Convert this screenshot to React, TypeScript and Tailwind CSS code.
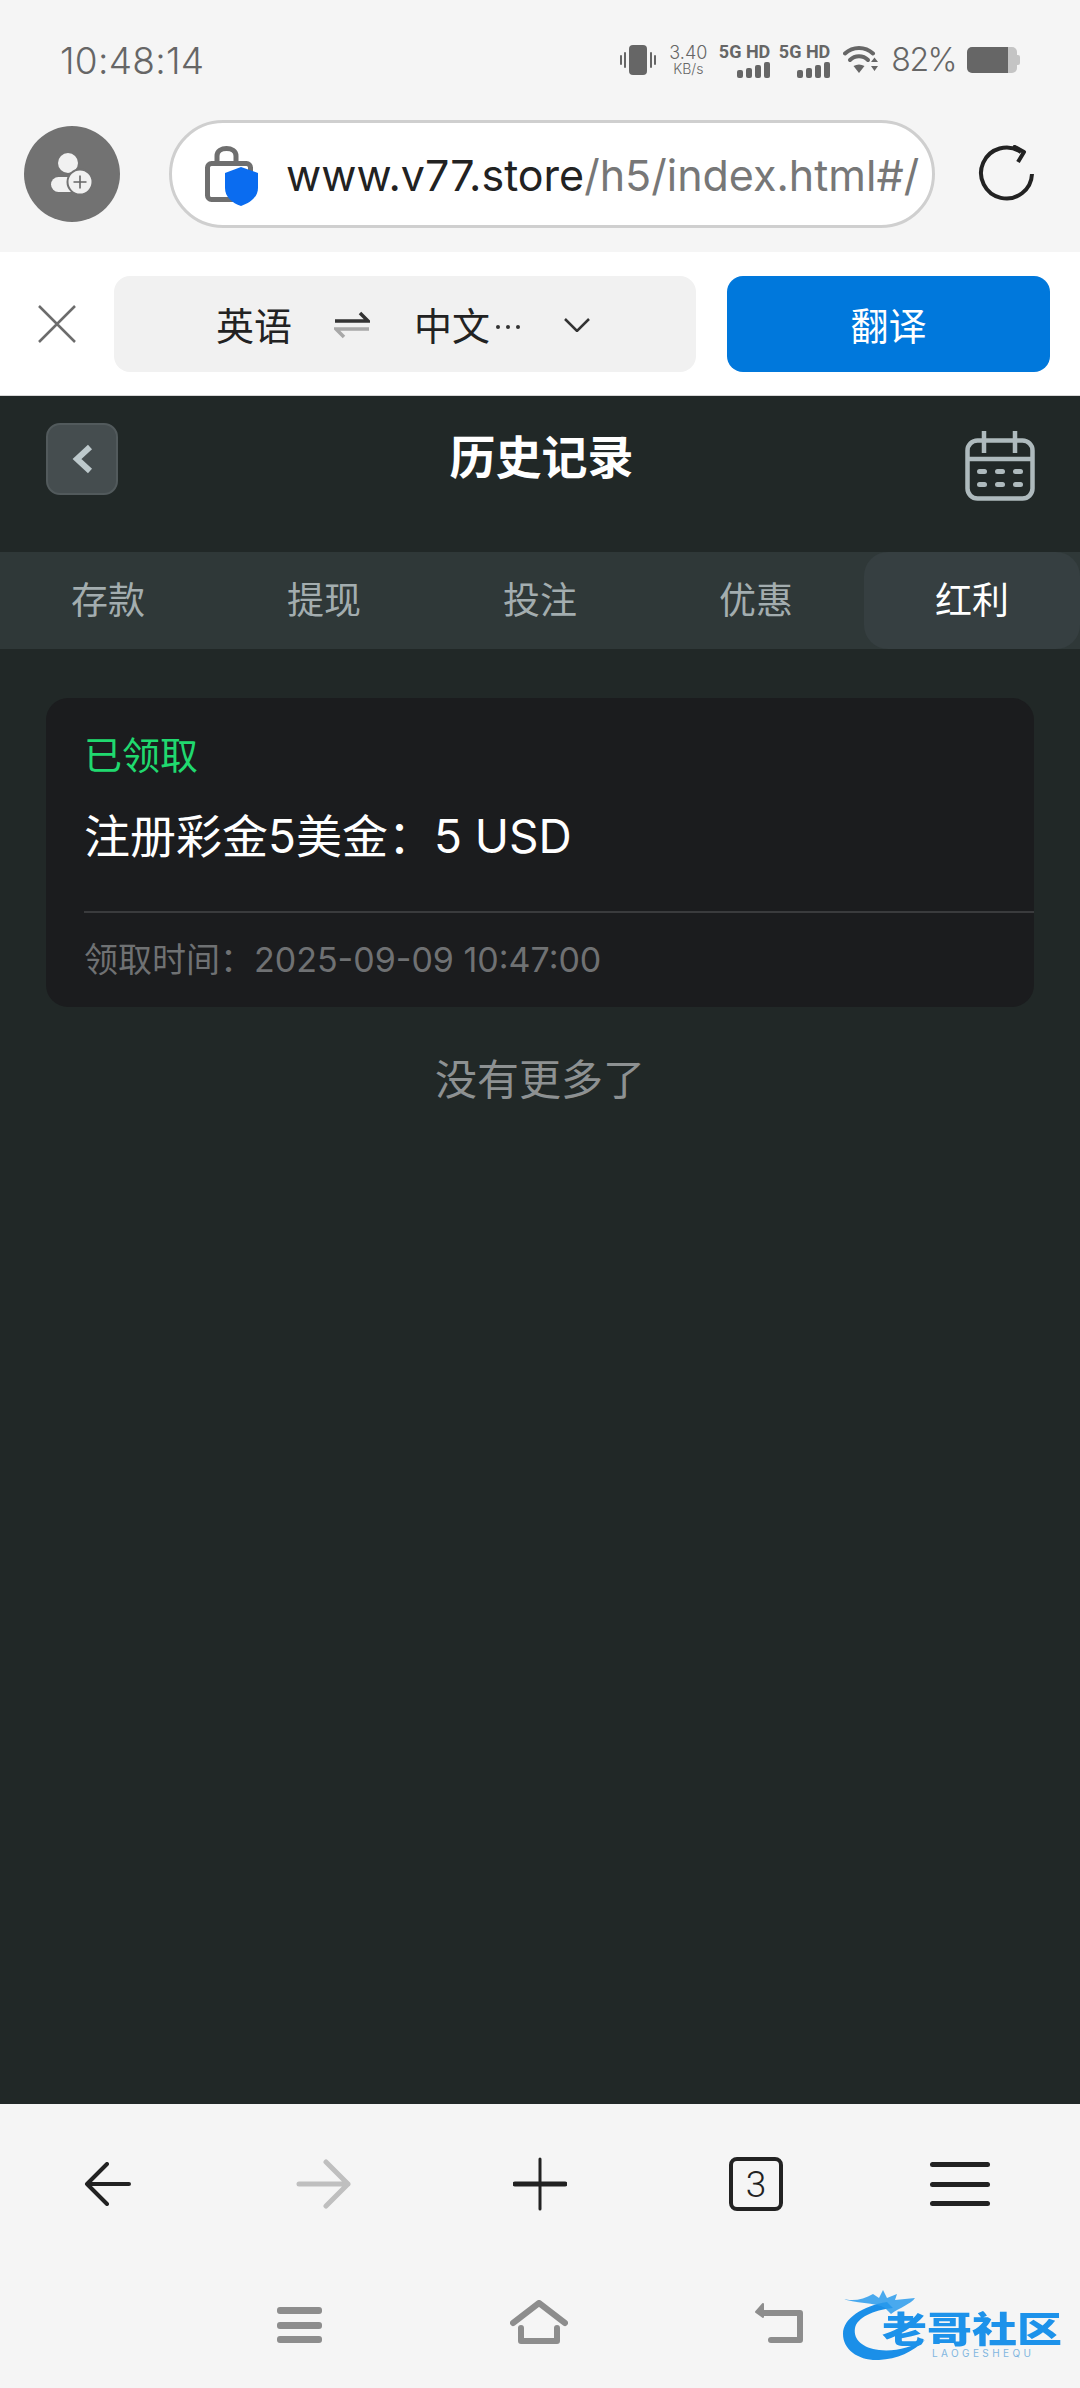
import React from 'react';

const FONT = "font-['Inter','Noto_Sans_CJK_SC',sans-serif]";

const TABS = [
  { label: '存款' },
  { label: '提现' },
  { label: '投注' },
  { label: '优惠' },
  { label: '红利', active: true },
];

function SignalBlock() {
  return (
    <div className="flex w-[49px] flex-col items-end">
      <span className="font-['Roboto'] text-[18px] leading-[17px] font-bold whitespace-nowrap text-[#666]">5G HD</span>
      <div className="mt-[2px] flex items-end gap-[3px]">
        <span className="h-[8px] w-[6px] rounded-[2px] bg-[#666]" />
        <span className="h-[10px] w-[6px] rounded-[2px] bg-[#666]" />
        <span className="h-[13px] w-[6px] rounded-[2px] bg-[#666]" />
        <span className="h-[16px] w-[6px] rounded-[2px] bg-[#666]" />
      </div>
    </div>
  );
}

function StatusBar() {
  return (
    <div className="flex h-[116px] items-center justify-between pt-[4px] pr-[60px] pl-[60px]">
      <span className="text-[37px] leading-none font-light tracking-[0.3px] text-[#666]">10:48:14</span>
      <div className="flex items-center">
        <svg width="36" height="30" viewBox="0 0 36 30" className="mr-[13px]">
          <rect x="9" y="0" width="18" height="30" rx="4" fill="#666" />
          <rect x="0" y="10" width="2" height="10" rx="1" fill="#666" />
          <rect x="4" y="7" width="2" height="16" rx="1" fill="#666" />
          <rect x="30" y="7" width="2" height="16" rx="1" fill="#666" />
          <rect x="34" y="10" width="2" height="10" rx="1" fill="#666" />
        </svg>
        <div className="mr-[14px] flex w-[38px] flex-col items-center text-[#666]">
          <span className="text-[18px] leading-[18px] font-light">3.40</span>
          <span className="text-[14px] leading-[14px] font-light">KB/s</span>
        </div>
        <SignalBlock />
        <div className="ml-[11px]">
          <SignalBlock />
        </div>
        <svg width="36" height="30" viewBox="0 0 36 30" className="ml-[13px]" fill="none" stroke="#666" strokeLinecap="round">
          <path d="M2 8.500C10 1 22 1 30 8.500" strokeWidth="4" />
          <path d="M7 15C12 10 20 10 25 15" strokeWidth="4" />
          <path d="M10.500 21L16 28L21.500 21C18 19 14 19 10.500 21Z" fill="#666" stroke="none" />
          <path d="M28 17L31.500 12.500L35 17Z M28 21L35 21L31.500 26Z" fill="#666" stroke="none" />
        </svg>
        <span className="ml-[12px] text-[32px] leading-none font-light tracking-[-1.5px] text-[#666]">82%</span>
        <div className="ml-[11px] flex h-[26px] w-[53px] items-center">
          <span className="h-full w-[41px] rounded-l-[5px] bg-[#666]" />
          <span className="h-full w-[9px] rounded-r-[5px] bg-[#c4c4c4]" />
          <span className="h-[10px] w-[3px] rounded-r-[2px] bg-[#c4c4c4]" />
        </div>
      </div>
    </div>
  );
}

function AddressBar() {
  return (
    <div className="flex h-[136px] items-start pt-[4px] pl-[24px]">
      <div className="mt-[6px] flex h-[96px] w-[96px] items-center justify-center rounded-full bg-[#727272]">
        <svg width="48" height="44" viewBox="0 0 48 44">
          <circle cx="20" cy="11" r="10" fill="#f1f1f1" />
          <rect x="3" y="25" width="34" height="15" rx="7.500" fill="#f1f1f1" />
          <circle cx="32" cy="30" r="12.500" fill="#f1f1f1" stroke="#727272" strokeWidth="2" />
          <path d="M32 23.500V36.500M25.500 30H38.500" stroke="#666" strokeWidth="1.600" />
        </svg>
      </div>
      <div className="ml-[49px] flex h-[108px] w-[766px] items-center rounded-full border-[3px] border-[#cfcfcf] bg-white pl-[33px]">
        <svg width="54" height="64" viewBox="0 0 54 64" className="mt-[2px] shrink-0">
          <path d="M12 20V13C12 3 31 3 31 13V20" fill="none" stroke="#6f6f6f" strokeWidth="5" />
          <rect x="2.500" y="20.500" width="43" height="36" rx="4" fill="none" stroke="#6f6f6f" strokeWidth="5" />
          <path d="M36 24L53 30V45C53 54 45 60 36 63C27 60 20 54 20 45V30Z" fill="#0a6cf0" />
        </svg>
        <div className="mt-[3px] ml-[27px] text-[43px] leading-none whitespace-nowrap">
          <span className="text-[#222]">www.v77.store</span>
          <span className="text-[#777]">/h5/index.html#/</span>
        </div>
      </div>
      <svg width="58" height="58" viewBox="0 0 58 58" className="mt-[25px] ml-[43px]" fill="none" stroke="#222" strokeWidth="4">
        <path d="M43 7A25.500 25.500 0 1 0 54 29" />
        <path d="M35 1L46 7L40 17" strokeLinejoin="round" />
      </svg>
    </div>
  );
}

function TranslateBar() {
  return (
    <div className="flex h-[144px] items-center border-b-[1px] border-[#d8d8d8] bg-white pt-[1px]">
      <svg width="38" height="38" viewBox="0 0 38 38" className="ml-[38px] shrink-0" stroke="#6c6c6c" strokeWidth="2.500">
        <path d="M1 1L37 37M37 1L1 37" />
      </svg>
      <div className="ml-[38px] flex h-[96px] w-[582px] items-center rounded-[16px] bg-[#f1f1f1] pl-[102px] text-[38px] leading-none text-[#222]">
        <span className="pt-[3px]">英语</span>
        <svg width="36" height="32" viewBox="0 0 36 32" className="mt-[2px] ml-[42px]" fill="none" strokeWidth="3.500">
          <path d="M1 12H34L26 4" stroke="#333" />
          <path d="M35 20H2L10 28" stroke="#a8a8a8" />
        </svg>
        <span className="ml-[44px] pt-[3px]">中文</span>
        <div className="ml-[6px] flex items-center gap-[6px] pt-[6px]">
          <span className="h-[4px] w-[4px] rounded-full bg-[#333]" />
          <span className="h-[4px] w-[4px] rounded-full bg-[#333]" />
          <span className="h-[4px] w-[4px] rounded-full bg-[#333]" />
        </div>
        <svg width="26" height="14" viewBox="0 0 26 14" className="mt-[1px] ml-[44px]" fill="none" stroke="#333" strokeWidth="2.500">
          <path d="M1 1L13 13L25 1" />
        </svg>
      </div>
      <div className="ml-[31px] flex h-[96px] w-[323px] items-center justify-center rounded-[16px] bg-[#0078dc] pt-[3px] text-[38px] leading-none text-white">
        翻译
      </div>
    </div>
  );
}

function Header() {
  return (
    <div className="flex h-[156px] items-start justify-between pt-[27px] pr-[45px] pl-[46px]">
      <div className="flex h-[72px] w-[72px] items-center justify-center rounded-[14px] border-[2px] border-[#525a5c] bg-[#454d4f]">
        <svg width="22" height="32" viewBox="0 0 22 32" fill="none" stroke="#bdc9cc" strokeWidth="6">
          <path d="M19 4L6 16L19 28" />
        </svg>
      </div>
      <h1 className="mt-[7px] text-[46px] leading-[54px] font-bold text-white">历史记录</h1>
      <svg width="70" height="70" viewBox="0 0 70 70" className="mt-[8px]" fill="none" stroke="#aebabd" strokeWidth="4.500">
        <rect x="2.500" y="9.500" width="65" height="58" rx="10" />
        <path d="M2.500 28H67.500M19 0V22M50 0V22" />
        <g stroke="none" fill="#aebabd">
          <rect x="12" y="38" width="10" height="5" rx="2.500" />
          <rect x="30" y="38" width="10" height="5" rx="2.500" />
          <rect x="48" y="38" width="10" height="5" rx="2.500" />
          <rect x="12" y="51" width="10" height="5" rx="2.500" />
          <rect x="30" y="51" width="10" height="5" rx="2.500" />
          <rect x="48" y="51" width="10" height="5" rx="2.500" />
        </g>
      </svg>
    </div>
  );
}

function Tabs() {
  return (
    <div className="grid h-[97px] grid-cols-5 bg-[#2f3838]">
      {TABS.map(tab => (
        <div
          key={tab.label}
          className={
            tab.active
              ? 'flex items-center justify-center rounded-[24px] bg-[#363f41] text-[37px] leading-none text-white'
              : 'flex items-center justify-center text-[37px] leading-none text-[#a3adaf]'
          }
        >
          {tab.label}
        </div>
      ))}
    </div>
  );
}

function RecordCard() {
  return (
    <div className="mx-[46px] mt-[49px] h-[309px] rounded-[22px] bg-[#1b1c1e] pt-[35px] pl-[38px]">
      <div className="text-[38px] leading-[44px] text-[#20d96f]">已领取</div>
      <div className="mt-[32px] text-[46px] leading-[54px] text-white">注册彩金5美金：5 USD</div>
      <div className="mt-[48px] h-[2px] bg-[#3a3b3d]" />
      <div className="mt-[27px] text-[34px] leading-[40px] text-[#6f7173]">领取时间：2025-09-09 10:47:00</div>
    </div>
  );
}

function BrowserNav() {
  return (
    <div className="grid h-[160px] grid-cols-5 items-center">
      <div className="flex justify-center">
        <svg width="48" height="44" viewBox="0 0 48 44" fill="none" stroke="#222" strokeWidth="4" strokeLinecap="round" strokeLinejoin="round">
          <path d="M23 2L3 22L23 42M3 22H45" />
        </svg>
      </div>
      <div className="flex justify-center">
        <svg width="56" height="50" viewBox="0 0 56 50" fill="none" stroke="#bfbfbf" strokeWidth="5" strokeLinecap="round" strokeLinejoin="round">
          <path d="M30 3L52 25L30 47M3 25H52" />
        </svg>
      </div>
      <div className="flex justify-center">
        <svg width="54" height="54" viewBox="0 0 54 54" stroke="#222" strokeLinecap="round">
          <path d="M27 2V52" strokeWidth="3" />
          <path d="M2 27H52" strokeWidth="5" />
        </svg>
      </div>
      <div className="flex justify-center">
        <div className="flex h-[54px] w-[54px] items-center justify-center rounded-[8px] border-[4px] border-[#222] font-['Roboto'] text-[37px] leading-none font-light text-[#222]">
          3
        </div>
      </div>
      <div className="mr-[24px] flex justify-center">
        <div className="flex h-[44px] w-[60px] flex-col justify-between">
          <span className="h-[5px] rounded-full bg-[#222]" />
          <span className="h-[5px] rounded-full bg-[#222]" />
          <span className="h-[5px] rounded-full bg-[#222]" />
        </div>
      </div>
    </div>
  );
}

function Logo() {
  return (
    <div className="relative mt-[14px] ml-[38px] h-[72px] w-[222px] shrink-0">
      <svg width="100" height="72" viewBox="0 0 100 72" className="absolute top-0 left-0 blur-[0.6px]">
        <path d="M46 12C22 16 2 28 2 44C2 60 18 71 38 70C56 69 72 62 84 50C70 57 54 62 38 60C22 58 12 50 14 38C16 28 32 20 52 18Z" fill="#1b8fe8" />
        <path d="M0 8C10 12 22 10 32 4L38 8L42 0L46 8L56 4L54 10L74 8C70 14 58 18 50 24L44 18C34 12 14 14 0 8Z" fill="#2a9bec" opacity="0.85" />
      </svg>
      <span className="absolute top-[25px] left-[41px] origin-left scale-x-125 text-[36px] leading-[30px] font-black whitespace-nowrap text-[#1d92ea]">
        老哥社区
      </span>
      <span className="absolute top-[57px] left-[91px] text-[10px] leading-[12px] tracking-[3.400px] whitespace-nowrap text-[#7fb6e0]">
        LAOGESHEQU
      </span>
    </div>
  );
}

function SystemNav() {
  return (
    <div className="flex h-[124px] items-start pt-[12px] pl-[277px]">
      <div className="mt-[31px] flex h-[36px] w-[45px] flex-col justify-between">
        <span className="h-[7px] rounded-[3px] bg-[#8d8d8d]" />
        <span className="h-[7px] rounded-[3px] bg-[#8d8d8d]" />
        <span className="h-[7px] rounded-[3px] bg-[#8d8d8d]" />
      </div>
      <svg width="58" height="44" viewBox="0 0 58 44" className="mt-[24px] ml-[188px]" fill="none" stroke="#8d8d8d" strokeWidth="6" strokeLinecap="round" strokeLinejoin="round">
        <path d="M3 23L29 3L55 23" />
        <path d="M11 28V41H47V28" />
      </svg>
      <svg width="49" height="41" viewBox="0 0 49 41" className="mt-[26px] ml-[186px]" fill="none" stroke="#8d8d8d" strokeWidth="6" strokeLinecap="round" strokeLinejoin="round">
        <path d="M10 11H46V38H17" />
        <path d="M9 2L2 10L9 15Z" strokeWidth="2" fill="#8d8d8d" />
      </svg>
      <Logo />
    </div>
  );
}

export default function App() {
  return (
    <div className={`flex h-[2388px] w-[1080px] flex-col overflow-hidden bg-[#f5f5f5] ${FONT}`}>
      <StatusBar />
      <AddressBar />
      <TranslateBar />

      <main className="flex-1 bg-[#212827]">
        <Header />
        <Tabs />
        <RecordCard />
        <div className="mt-[49px] text-center text-[42px] leading-[48px] text-[#8d9192]">没有更多了</div>
      </main>

      <BrowserNav />
      <SystemNav />
    </div>
  );
}
